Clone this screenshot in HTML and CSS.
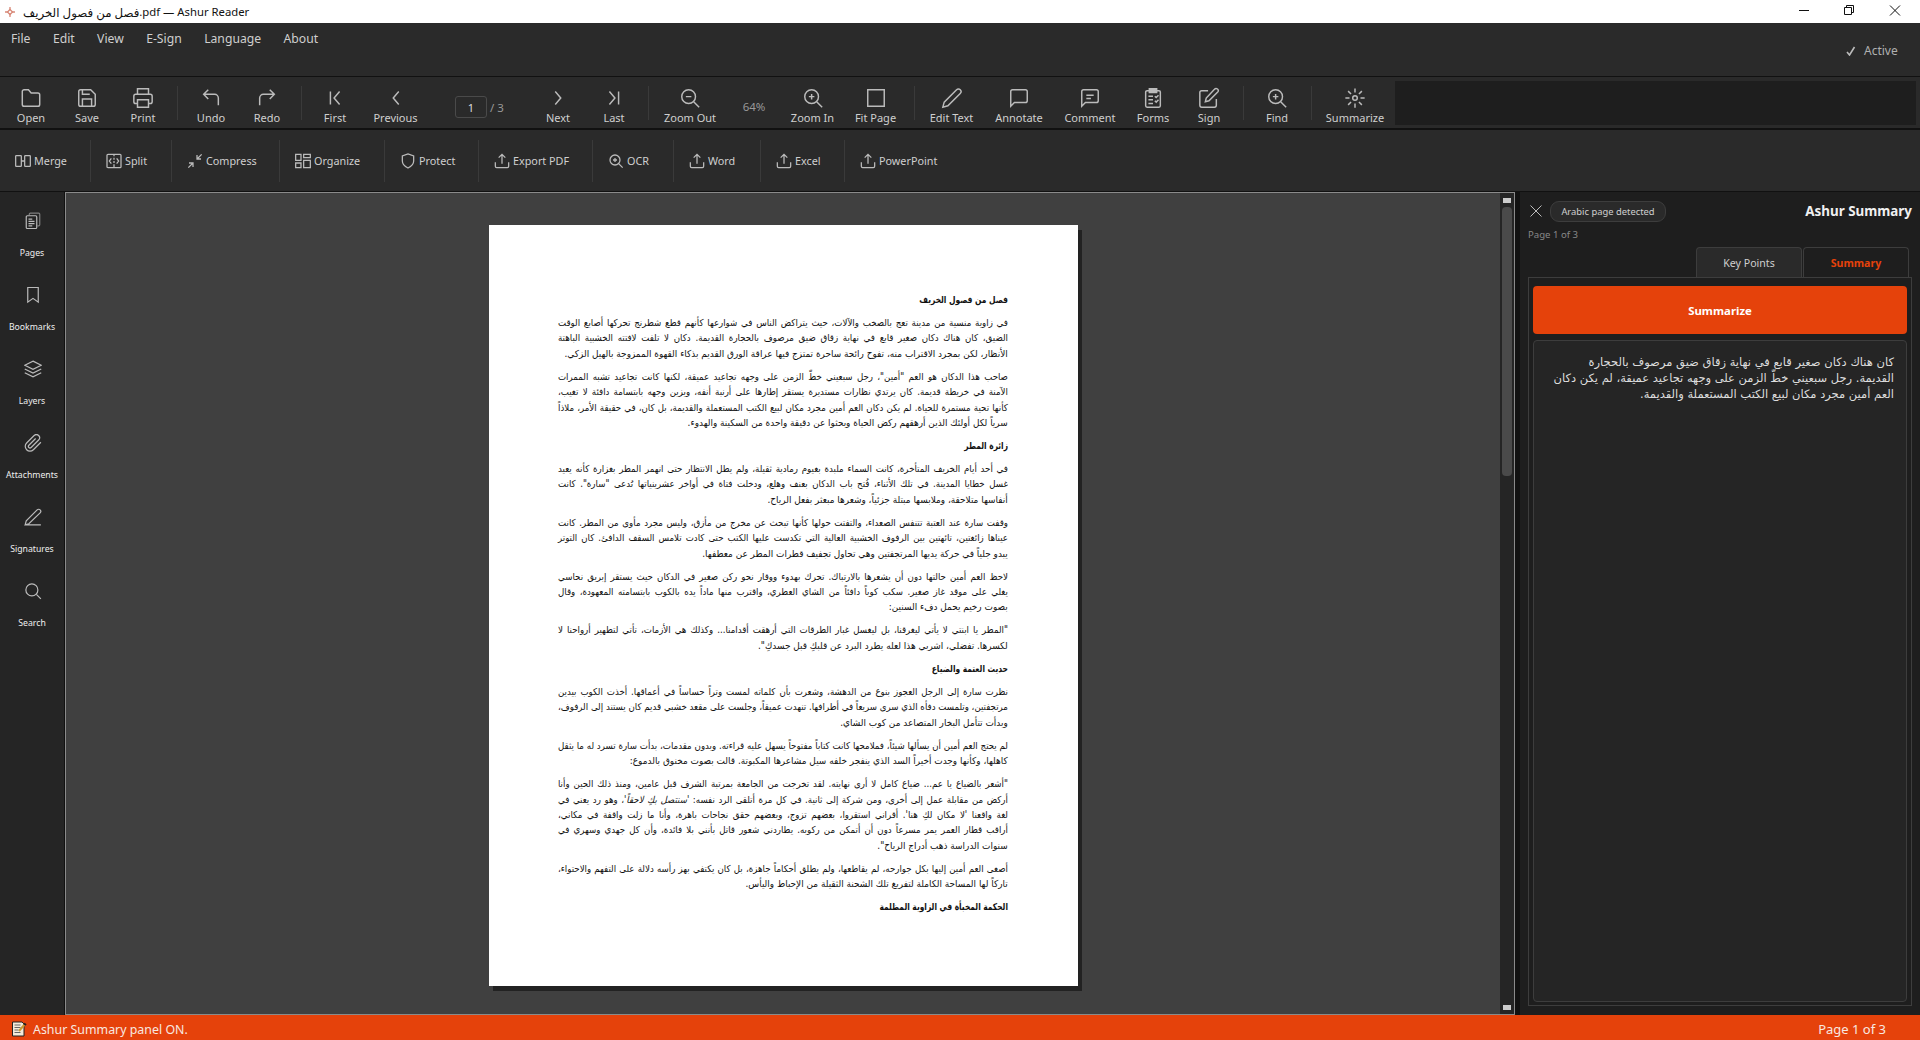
FILE: index.html
```html
<!DOCTYPE html>
<html lang="en">
<head>
    <meta charset="UTF-8">
    <meta name="viewport" content="width=device-width, initial-scale=1.0">
    <title>فصل من فصول الخريف.pdf — Ashur Reader</title>
    <link rel="stylesheet" href="styles.css">
</head>
<body>

<!-- Icon set -->
<svg class="icon-set" xmlns="http://www.w3.org/2000/svg">
    <symbol id="open" viewBox="0 0 24 24"><path d="M2.500 5a2 2 0 0 1 2-2h4.700l3 3.500h7.300a2 2 0 0 1 2 2v10.500a2 2 0 0 1-2 2h-15a2 2 0 0 1-2-2z"/></symbol>
    <symbol id="save" viewBox="0 0 24 24"><path d="M5 3h11l5 5v11a2 2 0 0 1-2 2H5a2 2 0 0 1-2-2V5a2 2 0 0 1 2-2zM7 21v-8h10v8M7 3v5h8"/></symbol>
    <symbol id="print" viewBox="0 0 24 24"><path d="M6 8V2h12v6M6 18H4a2 2 0 0 1-2-2v-6a2 2 0 0 1 2-2h16a2 2 0 0 1 2 2v6a2 2 0 0 1-2 2h-2M6 14h12v8H6z"/></symbol>
    <symbol id="undo" viewBox="0 0 24 24"><path d="M9 13L4 8l5-5M4 8h12a4 4 0 0 1 4 4v8"/></symbol>
    <symbol id="redo" viewBox="0 0 24 24"><path d="M15 13l5-5-5-5M20 8H8a4 4 0 0 0-4 4v8"/></symbol>
    <symbol id="first" viewBox="0 0 24 24"><path d="M17 19l-6-7 6-7M7 5v14"/></symbol>
    <symbol id="prev" viewBox="0 0 24 24"><path d="M15 19l-6-7 6-7"/></symbol>
    <symbol id="next" viewBox="0 0 24 24"><path d="M9 19l6-7-6-7"/></symbol>
    <symbol id="last" viewBox="0 0 24 24"><path d="M7 19l6-7-6-7M17 5v14"/></symbol>
    <symbol id="zoom-out" viewBox="0 0 24 24"><circle cx="10.500" cy="10.500" r="7.500"/><path d="M16 16l6 6M7.500 10.500h6"/></symbol>
    <symbol id="zoom-in" viewBox="0 0 24 24"><circle cx="10.500" cy="10.500" r="7.500"/><path d="M16 16l6 6M7.500 10.500h6M10.500 7.500v6"/></symbol>
    <symbol id="fit" viewBox="0 0 24 24"><path d="M3 3h18v18H3z"/></symbol>
    <symbol id="edit" viewBox="0 0 24 24"><path d="M17 3a2.800 2.800 0 0 1 4 4L7.500 20.500 2 22l1.500-5.500z"/></symbol>
    <symbol id="annotate" viewBox="0 0 24 24"><path d="M21 15a2 2 0 0 1-2 2H7l-4 4V5a2 2 0 0 1 2-2h14a2 2 0 0 1 2 2z"/></symbol>
    <symbol id="comment" viewBox="0 0 24 24"><path d="M21 15a2 2 0 0 1-2 2H7l-4 4V5a2 2 0 0 1 2-2h14a2 2 0 0 1 2 2zM8 9h8M8 12.500h5"/></symbol>
    <symbol id="forms" viewBox="0 0 24 24"><path d="M8 4H5.500a1.500 1.500 0 0 0-1.500 1.500v15A1.500 1.500 0 0 0 5.500 22h13a1.500 1.500 0 0 0 1.500-1.500v-15A1.500 1.500 0 0 0 18.500 4H16M7 10h5M7 14h5M7 18h5M14 10l1.500 1.500L18 9M14 15l1.500 1.500L18 14"/><path d="M8 2h8v4H8z" fill="#bbb"/></symbol>
    <symbol id="sign" viewBox="0 0 24 24"><path d="M11 4H4a2 2 0 0 0-2 2v14a2 2 0 0 0 2 2h14a2 2 0 0 0 2-2v-7M18 2.500a2.100 2.100 0 0 1 3.500 3L12 15l-4 1 1-4z"/></symbol>
    <symbol id="sun" viewBox="0 0 24 24"><circle cx="12" cy="12" r="2.500"/><path d="M12 1.500v4.500M12 18v4.500M1.500 12H6M18 12h4.500M4.500 4.500l3.200 3.200M16.300 16.300l3.200 3.200M4.500 19.500l3.200-3.200M16.300 7.700l3.200-3.200"/></symbol>
    <symbol id="merge" viewBox="0 0 24 24"><path d="M2 4h6.500a1 1 0 0 1 1 1v14a1 1 0 0 1-1 1H2a1 1 0 0 1-1-1V5a1 1 0 0 1 1-1zM15.500 4H22a1 1 0 0 1 1 1v14a1 1 0 0 1-1 1h-6.500a1 1 0 0 1-1-1V5a1 1 0 0 1 1-1zM10 12h4"/></symbol>
    <symbol id="split" viewBox="0 0 24 24"><path d="M3 2h18a1.500 1.500 0 0 1 1.500 1.500v17A1.500 1.500 0 0 1 21 22H3a1.500 1.500 0 0 1-1.500-1.500v-17A1.500 1.500 0 0 1 3 2zM12 2v3M12 7v3M12 12v3M12 17v4M8 8l-3 4 3 4M16 8l3 4-3 4"/></symbol>
    <symbol id="compress" viewBox="0 0 24 24"><path d="M22 2l-7 7M15 3v6h6M2 22l7-7M3 15h6v6"/></symbol>
    <symbol id="organize" viewBox="0 0 24 24"><path d="M1 2h8v9H1zM13 2h10v5H13zM13 11h10v11H13zM1 15h8v7H1z"/></symbol>
    <symbol id="protect" viewBox="0 0 24 24"><path d="M12 22.500s8.500-4 8.500-10.500V4.500L12 1.500 3.500 4.500V12c0 6.500 8.500 10.500 8.500 10.500z"/></symbol>
    <symbol id="export" viewBox="0 0 24 24"><path d="M2 14v6a2 2 0 0 0 2 2h16a2 2 0 0 0 2-2v-6M12 16V2M7 7l5-5 5 5"/></symbol>
    <symbol id="pages" viewBox="0 0 24 24"><path d="M7 4V3a1.500 1.500 0 0 1 1.500-1.500h11A1.500 1.500 0 0 1 21 3v14a1.500 1.500 0 0 1-1.500 1.500H18" opacity=".6"/><path d="M4.500 5h11A1.500 1.500 0 0 1 17 6.500v14a1.500 1.500 0 0 1-1.500 1.500h-11A1.500 1.500 0 0 1 3 20.500v-14A1.500 1.500 0 0 1 4.500 5zM6 9.500h5M6 12.500h8M6 15.500h8M6 18.500h5"/></symbol>
    <symbol id="bookmark" viewBox="0 0 24 24"><path d="M5 2h14v19.500l-7-5-7 5z"/></symbol>
    <symbol id="layers" viewBox="0 0 24 24"><path d="M12 1.500l11 5.500-11 5.500L1 7zM1 12l11 5.500L23 12M1 17l11 5.500L23 17"/></symbol>
    <symbol id="clip" viewBox="0 0 24 24"><path d="M22.500 11l-10 10a6.300 6.300 0 0 1-9-9l10-10a4.200 4.200 0 0 1 6 6l-10 10a2.100 2.100 0 0 1-3-3l9-9"/></symbol>
    <symbol id="pen" viewBox="0 0 24 24"><path d="M1.500 22.500h21M17.500 2.500a2.800 2.800 0 0 1 4 4L6.500 21 1.500 22.500 3 17z"/></symbol>
    <symbol id="search" viewBox="0 0 24 24"><circle cx="10.500" cy="10.500" r="8"/><path d="M16.500 16.500l6 6"/></symbol>
</svg>

<div class="titlebar">
    <svg class="logo" viewBox="0 0 12 12"><path d="M6 0v4M6 8v4M0 6h4M8 6h4"/><path d="M6 3l3 3-3 3-3-3z"/></svg>
    <div class="title"><span class="doc-name" dir="rtl">فصل من فصول الخريف</span><span>.pdf — Ashur Reader</span></div>
    <svg class="window-buttons" viewBox="0 0 104 12"><path d="M1 6.500h10M46.500 3.500h7v7h-7zM48.500 3.500v-2h7v7h-2M92 1.500l10 10M102 1.500l-10 10"/></svg>
</div>

<div class="menubar">
    <nav>
        <span>File</span>
        <span>Edit</span>
        <span>View</span>
        <span>E-Sign</span>
        <span>Language</span>
        <span>About</span>
    </nav>
    <div class="license"><svg viewBox="0 0 10 10"><path d="M1 6l2.500 3L8.500 1"/></svg>Active</div>
</div>

<div class="toolbar">
    <div class="tool"><svg><use href="#open"/></svg>Open</div>
    <div class="tool"><svg><use href="#save"/></svg>Save</div>
    <div class="tool"><svg><use href="#print"/></svg>Print</div>
    <div class="sep"></div>
    <div class="tool"><svg><use href="#undo"/></svg>Undo</div>
    <div class="tool"><svg><use href="#redo"/></svg>Redo</div>
    <div class="sep"></div>
    <div class="tool"><svg><use href="#first"/></svg>First</div>
    <div class="tool w65"><svg><use href="#prev"/></svg>Previous</div>
    <div class="page-nav"><span class="page-input">1</span><span>/ 3</span></div>
    <div class="tool"><svg><use href="#next"/></svg>Next</div>
    <div class="tool"><svg><use href="#last"/></svg>Last</div>
    <div class="sep"></div>
    <div class="tool w72"><svg><use href="#zoom-out"/></svg>Zoom Out</div>
    <div class="zoom-level">64%</div>
    <div class="tool w61"><svg><use href="#zoom-in"/></svg>Zoom In</div>
    <div class="tool w65"><svg><use href="#fit"/></svg>Fit Page</div>
    <div class="sep"></div>
    <div class="tool w63"><svg><use href="#edit"/></svg>Edit Text</div>
    <div class="tool w72"><svg><use href="#annotate"/></svg>Annotate</div>
    <div class="tool w70"><svg><use href="#comment"/></svg>Comment</div>
    <div class="tool"><svg><use href="#forms"/></svg>Forms</div>
    <div class="tool"><svg><use href="#sign"/></svg>Sign</div>
    <div class="sep"></div>
    <div class="tool"><svg><use href="#zoom-in"/></svg>Find</div>
    <div class="sep"></div>
    <div class="tool w76"><svg><use href="#sun"/></svg>Summarize</div>
    <div class="toolbar-space"></div>
</div>

<div class="actions">
    <div class="action merge"><svg><use href="#merge"/></svg>Merge</div>
    <div class="action split"><svg><use href="#split"/></svg>Split</div>
    <div class="action compress"><svg><use href="#compress"/></svg>Compress</div>
    <div class="action organize"><svg><use href="#organize"/></svg>Organize</div>
    <div class="action protect"><svg><use href="#protect"/></svg>Protect</div>
    <div class="action export"><svg><use href="#export"/></svg>Export PDF</div>
    <div class="action ocr"><svg><use href="#zoom-in"/></svg>OCR</div>
    <div class="action word"><svg><use href="#export"/></svg>Word</div>
    <div class="action excel"><svg><use href="#export"/></svg>Excel</div>
    <div class="action powerpoint"><svg><use href="#export"/></svg>PowerPoint</div>
</div>

<main>
    <aside class="sidebar">
        <div class="side-item"><svg><use href="#pages"/></svg>Pages</div>
        <div class="side-item"><svg><use href="#bookmark"/></svg>Bookmarks</div>
        <div class="side-item"><svg><use href="#layers"/></svg>Layers</div>
        <div class="side-item"><svg><use href="#clip"/></svg>Attachments</div>
        <div class="side-item"><svg><use href="#pen"/></svg>Signatures</div>
        <div class="side-item"><svg><use href="#search"/></svg>Search</div>
    </aside>

    <section class="viewer">
        <div class="canvas">
            <article class="page" lang="ar" dir="rtl">
                <h2>فصل من فصول الخريف</h2>
                <p>
                    <span>في زاوية منسية من مدينة تعج بالصخب والآلات، حيث يتراكض الناس في شوارعها كأنهم قطع شطرنج تحركها أصابع الوقت</span>
                    <span>الضيق، كان هناك دكان صغير قابع في نهاية زقاق ضيق مرصوف بالحجارة القديمة. دكان لا تلفت لافتته الخشبية الباهتة</span>
                    <span class="end">الأنظار، لكن بمجرد الاقتراب منه، تفوح رائحة ساحرة تمتزج فيها عراقة الورق القديم بذكاء القهوة الممزوجة بالهيل الزكي.</span>
                </p>
                <p>
                    <span>صاحب هذا الدكان هو العم "أمين"، رجل سبعيني خطّ الزمن على وجهه تجاعيد عميقة، لكنها كانت تجاعيد تشبه الممرات</span>
                    <span>الآمنة في خريطة قديمة. كان يرتدي نظارات مستديرة يستقر إطارها على أرنبة أنفه، ويزين وجهه بابتسامة دافئة لا تغيب،</span>
                    <span>كأنها تحية مستمرة للحياة. لم يكن دكان العم أمين مجرد مكان لبيع الكتب المستعملة والقديمة، بل كان، في حقيقة الأمر، ملاذاً</span>
                    <span class="end">سرياً لكل أولئك الذين أرهقهم ركض الحياة وبحثوا عن دقيقة واحدة من السكينة والهدوء.</span>
                </p>
                <h2>زائرة المطر</h2>
                <p>
                    <span>في أحد أيام الخريف المتأخرة، كانت السماء ملبدة بغيوم رمادية ثقيلة، ولم يطل الانتظار حتى انهمر المطر بغزارة كأنه يعيد</span>
                    <span>غسل خطايا المدينة. في تلك الأثناء، فُتح باب الدكان بعنف وهلع، ودخلت فتاة في أواخر عشرينياتها تُدعى "سارة". كانت</span>
                    <span class="end">أنفاسها متلاحقة، وملابسها مبتلة جزئياً، وشعرها مبعثر بفعل الرياح.</span>
                </p>
                <p>
                    <span>وقفت سارة عند العتبة تتنفس الصعداء، والتفتت حولها كأنها تبحث عن مخرج من مأزق، وليس مجرد مأوى من المطر. كانت</span>
                    <span>عيناها زائغتين، تائهتين بين الرفوف الخشبية العالية التي تكدست عليها الكتب حتى كادت تلامس السقف الدافئ. كان التوتر</span>
                    <span class="end">يبدو جلياً في حركة يديها المرتجفتين وهي تحاول تجفيف قطرات المطر عن معطفها.</span>
                </p>
                <p>
                    <span>لاحظ العم أمين حالتها دون أن يشعرها بالارتباك. تحرك بهدوء ووقار نحو ركن صغير في الدكان حيث يستقر إبريق نحاسي</span>
                    <span>يغلي على موقد غاز صغير. سكب كوباً دافئاً من الشاي العطري، واقترب منها ماداً يده بالكوب بابتسامته المعهودة، وقال</span>
                    <span class="end">بصوت رخيم يحمل دفء السنين:</span>
                </p>
                <p>
                    <span>"المطر يا ابنتي لا يأتي ليغرقنا، بل ليغسل غبار الطرقات التي أرهقت أقدامنا... وكذلك هي الأزمات، تأتي لتطهير أرواحنا لا</span>
                    <span class="end">لكسرها. تفضلي، اشربي هذا لعله يطرد البرد عن قلبكِ قبل جسدكِ".</span>
                </p>
                <h2>حديث العتمة والضياع</h2>
                <p>
                    <span>نظرت سارة إلى الرجل العجوز بنوع من الدهشة، وشعرت بأن كلماته لمست وتراً حساساً في أعماقها. أخذت الكوب بيدين</span>
                    <span>مرتجفتين، وتلمست دفأه الذي سرى سريعاً في أطرافها. تنهدت عميقاً، وجلست على مقعد خشبي قديم كان يستند إلى الرفوف،</span>
                    <span class="end">وبدأت تتأمل البخار المتصاعد من كوب الشاي.</span>
                </p>
                <p>
                    <span>لم يحتج العم أمين أن يسألها شيئاً، فملامحها كانت كتاباً مفتوحاً يسهل عليه قراءته. وبدون مقدمات، بدأت سارة تسرد له ما يثقل</span>
                    <span class="end">كاهلها، وكأنها وجدت أخيراً السد الذي ينفجر خلفه سيل مشاعرها المكبوتة. قالت بصوت مخنوق بالدموع:</span>
                </p>
                <p>
                    <span>"أشعر بالضياع يا عم... ضياع كامل لا أرى نهايته. لقد تخرجت من الجامعة بمرتبة الشرف قبل عامين، ومنذ ذلك الحين وأنا</span>
                    <span>أركض من مقابلة عمل إلى أخرى، ومن شركة إلى ثانية. في كل مرة أتلقى الرد نفسه: <i>'سنتصل بكِ لاحقاً'</i>، وهو رد يعني في</span>
                    <span>لغة واقعنا 'لا مكان لكِ هنا'. أقراني استقروا، بعضهم تزوج، وبعضهم حقق نجاحات باهرة، وأنا ما زلت واقفة في مكاني،</span>
                    <span>أراقب قطار العمر يمر مسرعاً دون أن أتمكن من ركوبه. يطاردني شعور قاتل بأنني بلا فائدة، وأن كل جهدي وسهري في</span>
                    <span class="end">سنوات الدراسة ذهب أدراج الرياح".</span>
                </p>
                <p>
                    <span>أصغى العم أمين إليها بكل جوارحه، لم يقاطعها، ولم يطلق أحكاماً جاهزة، بل كان يكتفي بهز رأسه دلالة على التفهم والاحتواء،</span>
                    <span class="end">تاركاً لها المساحة الكاملة لتفريغ تلك الشحنة الثقيلة من الإحباط واليأس.</span>
                </p>
                <h2>الحكمة المخبأة في الزاوية المظلمة</h2>
            </article>
        </div>
        <div class="scrollbar">
            <div class="scroll-btn"></div>
            <div class="scroll-thumb"></div>
            <div class="scroll-btn"></div>
        </div>
    </section>

    <aside class="panel">
        <div class="panel-head">
            <svg viewBox="0 0 12 12"><path d="M.500.500l11 11M11.500.500l-11 11"/></svg>
            <span class="pill">Arabic page detected</span>
            <h1>Ashur Summary</h1>
        </div>
        <div class="panel-page">Page 1 of 3</div>
        <div class="tabs">
            <div class="tab">Key Points</div>
            <div class="tab active">Summary</div>
        </div>
        <div class="pane">
            <button>Summarize</button>
            <div class="summary" lang="ar" dir="rtl">
                <div>كان هناك دكان صغير قابع في نهاية زقاق ضيق مرصوف بالحجارة</div>
                <div>القديمة. رجل سبعيني خطّ الزمن على وجهه تجاعيد عميقة، لم يكن دكان</div>
                <div>العم أمين مجرد مكان لبيع الكتب المستعملة والقديمة.</div>
            </div>
        </div>
    </aside>
</main>

<footer>
    <svg viewBox="0 0 16 16"><path d="M1.500 1h9.500l2 2v12h-11.500z" fill="#f4ead8" stroke="#222"/><path d="M3.500 4h6M3.500 6.500h6M3.500 9h4M3.500 11.500h6" stroke="#666"/><path d="M8 10l6-7" stroke="#c99a30" stroke-width="2"/><path d="M13 2.500l2 1.500" stroke="#222" stroke-width="2"/></svg>
    <span>Ashur Summary panel ON.</span>
    <span class="status-page">Page 1 of 3</span>
</footer>

</body>
</html>
```
FILE: styles.css
```css
* {
    box-sizing: border-box;
}

body {
    margin: 0;
    height: 1040px;
    display: flex;
    flex-direction: column;
    overflow: hidden;
    background: #2a2a2a;
    color: #cfcfcf;
    font-family: "Noto Sans", "DejaVu Sans", sans-serif;
    font-size: 12px;
}

svg {
    fill: none;
    stroke: #bbb;
    stroke-width: 1.6;
    flex: none;
}

.icon-set {
    position: absolute;
    width: 0;
    height: 0;
}

/* Title bar and menu */
.titlebar {
    height: 23px;
    flex: none;
    display: flex;
    align-items: center;
    padding: 0 18px 0 5px;
    background: #fff;
    color: #111;
}

.logo {
    width: 10px;
    height: 10px;
    stroke: #d98a7a;
    margin-right: 8px;
}

.title {
    display: flex;
    font-size: 11.300px;
    white-space: nowrap;
}

.doc-name {
    font-size: 11.800px;
}

.window-buttons {
    width: 104px;
    height: 12px;
    margin: -3px 0 0 auto;
    stroke: #111;
    stroke-width: 1;
}

.menubar {
    height: 54px;
    flex: none;
    display: flex;
    justify-content: space-between;
    border-bottom: 1px solid #111;
}

.menubar nav {
    display: flex;
    gap: 22.400px;
    padding: 7px 0 0 11px;
    font-size: 12.200px;
}

.license {
    display: flex;
    align-items: center;
    gap: 8px;
    width: 74px;
    padding-top: 2px;
    color: #b0b0b0;
}

.license svg {
    width: 10px;
    height: 10px;
}

/* Main toolbar */
.toolbar {
    height: 53px;
    flex: none;
    display: flex;
    padding: 4px 4px 0 3px;
    border-bottom: 2px solid #111;
}

.tool {
    width: 56px;
    flex: none;
    display: flex;
    flex-direction: column;
    align-items: center;
    padding-top: 6px;
    font-size: 11px;
    line-height: 16px;
    white-space: nowrap;
}

.tool svg {
    width: 22px;
    height: 22px;
    margin-bottom: 1px;
}

.w61 { width: 61px; }
.w63 { width: 63px; }
.w65 { width: 65px; }
.w70 { width: 70px; }
.w72 { width: 72px; }
.w76 { width: 76px; }

.sep {
    width: 12px;
    height: 34px;
    margin-top: 5px;
    flex: none;
    background: linear-gradient(#3a3a3a, #3a3a3a) 6px 0 / 1px 100% no-repeat;
}

.page-nav {
    width: 102px;
    flex: none;
    display: flex;
    align-items: center;
    gap: 3px;
    padding: 5px 0 0 27px;
    color: #999;
    font-size: 11.500px;
}

.page-input {
    width: 32px;
    height: 22px;
    border: 1px solid #4a4a4a;
    border-radius: 3px;
    color: #ddd;
    font-size: 11px;
    line-height: 21px;
    text-align: center;
}

.zoom-level {
    width: 56px;
    flex: none;
    padding-top: 18px;
    color: #999;
    font-size: 11.500px;
    text-align: center;
}

.toolbar-space {
    flex: 1;
    height: 44px;
    margin-left: 2px;
    background: #1e1e1e;
}

/* Document actions */
.actions {
    height: 62px;
    flex: none;
    display: flex;
    align-items: center;
    border-bottom: 1px solid #111;
}

.action {
    display: flex;
    align-items: center;
    gap: 3px;
    height: 42px;
    flex: none;
    padding-left: 15px;
    border-right: 1px solid #3a3a3a;
    font-size: 10.800px;
    white-space: nowrap;
}

.action svg {
    width: 16px;
    height: 16px;
    stroke-width: 1.9;
}

.action:last-child {
    border: none;
}

.merge { width: 91px; }
.split { width: 81px; }
.compress { width: 108px; }
.organize { width: 105px; }
.protect { width: 94px; }
.export { width: 114px; }
.ocr { width: 81px; }
.word { width: 87px; }
.excel { width: 84px; }

/* Workspace */
main {
    flex: 1;
    display: flex;
    min-height: 0;
}

.sidebar {
    width: 65px;
    flex: none;
    padding-top: 16px;
    background: #252525;
    border-right: 1px solid #111;
}

.side-item {
    height: 74px;
    display: flex;
    flex-direction: column;
    align-items: center;
    padding-top: 4px;
    font-size: 8.700px;
    color: #eee;
}

.side-item svg {
    width: 18px;
    height: 18px;
    margin: 0 0 17px 1px;
}

.viewer {
    width: 1450px;
    flex: none;
    display: flex;
    border: 1px solid #8a8a8a;
    background: #404040;
}

.canvas {
    flex: 1;
    padding: 32px 0 0 423px;
}

.page {
    width: 589px;
    height: 761px;
    padding: 67px 70px 0 69px;
    background: #fff;
    box-shadow: 4px 5px 0 #222;
    color: #111;
    font-family: "DejaVu Sans", sans-serif;
    font-size: 9.600px;
    line-height: 15.400px;
}

.page h2,
.page p {
    margin: 0 0 7.600px;
    font-size: inherit;
}

.page h2 {
    transform: scaleX(.78);
    transform-origin: right;
}

.page span {
    display: block;
    width: 111.100%;
    transform: scaleX(.9);
    transform-origin: right;
    white-space: nowrap;
    text-align: justify;
    text-align-last: justify;
}

.page .end {
    width: 107.500%;
    transform: scaleX(.93);
    text-align-last: right;
}

.scrollbar {
    width: 14px;
    display: flex;
    flex-direction: column;
    align-items: center;
    background: #252525;
}

.scroll-btn {
    width: 8px;
    height: 5px;
    margin: 5px 0 4px;
    background: #ccc;
}

.scroll-btn:last-child {
    margin-top: auto;
}

.scroll-thumb {
    width: 10px;
    height: 269px;
    border-radius: 4px;
    background: #4a4a4a;
}

/* Summary panel */
.panel {
    flex: 1;
    min-width: 0;
    padding: 8px 8px 9px;
    border-left: 5px solid #111;
    background: #1e1e1e;
}

.panel-head {
    display: flex;
    align-items: center;
    height: 22px;
}

.panel-head svg {
    width: 12px;
    height: 12px;
    margin: 0 8px 0 2px;
    stroke-width: 1;
}

.pill {
    width: 116px;
    height: 21px;
    border: 1px solid #3d3d3d;
    border-radius: 9px;
    background: #2a2a2a;
    font-size: 9.400px;
    line-height: 20px;
    text-align: center;
}

.panel-head h1 {
    margin: 0 0 0 auto;
    color: #f0f0f0;
    font-size: 13.400px;
}

.panel-page {
    height: 25px;
    padding-top: 6px;
    color: #888;
    font-size: 9.600px;
    line-height: 14px;
}

.tabs {
    display: flex;
    justify-content: flex-end;
    gap: 1px;
    padding-right: 3px;
}

.tab {
    width: 106px;
    height: 30px;
    border: 1px solid #3d3d3d;
    border-bottom: none;
    border-radius: 4px 4px 0 0;
    background: #2a2a2a;
    font-size: 10.600px;
    line-height: 30px;
    text-align: center;
}

.tab.active {
    background: #1e1e1e;
    color: #e5420b;
    font-weight: bold;
}

.pane {
    height: 729px;
    padding: 8px 4px 4px;
    border: 1px solid #3d3d3d;
}

.pane button {
    display: block;
    width: 100%;
    height: 48px;
    margin-bottom: 6px;
    border: none;
    border-radius: 4px;
    background: #e5420b;
    color: #fff;
    font: bold 11.400px "Noto Sans", sans-serif;
}

.summary {
    height: 662px;
    padding: 13px 12px;
    border: 1px solid #3d3d3d;
    border-radius: 4px;
    background: #252525;
    color: #ddd;
    font-family: "DejaVu Sans", sans-serif;
    font-size: 11.500px;
    line-height: 16px;
    white-space: nowrap;
}

/* Status bar */
footer {
    height: 25px;
    flex: none;
    display: flex;
    align-items: center;
    gap: 6px;
    padding: 3px 34px 0 11px;
    background: #e5420b;
    color: #f8e8e0;
    font-size: 12.400px;
}

footer svg {
    width: 16px;
    height: 16px;
    stroke-width: 1;
}

.status-page {
    margin-left: auto;
    font-size: 13px;
}
```
